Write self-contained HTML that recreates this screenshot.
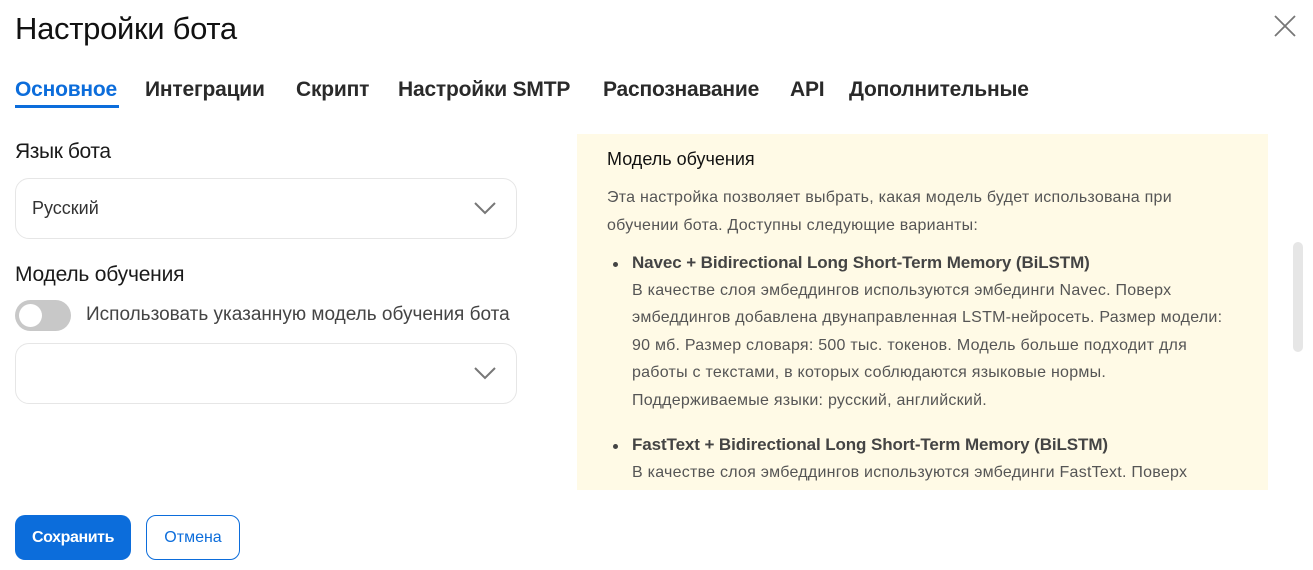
<!DOCTYPE html>
<html><head><meta charset="utf-8"><style>
body{margin:0;width:1313px;height:570px;background:#fff;font-family:"Liberation Sans",sans-serif;position:relative;overflow:hidden;color:#222}
.a{position:absolute;white-space:nowrap}
.tab{position:absolute;top:78px;font-size:21px;font-weight:bold;letter-spacing:-0.2px;color:#2a2a2a}
.sel{position:absolute;left:15px;width:502px;height:61px;border:1.5px solid #e6e6e6;border-radius:14px;box-sizing:border-box}
.p{position:absolute;left:607px;font-size:16px;color:#555;letter-spacing:0.25px;white-space:nowrap;line-height:20px}
.b{left:632px}
.h{font-weight:bold;color:#444;letter-spacing:-0.1px;font-size:17px}
</style></head><body>
<div class="a" style="left:15px;top:11px;font-size:31px;color:#111;letter-spacing:-0.3px">Настройки бота</div>
<svg class="a" style="left:1273px;top:14px" width="24" height="24"><path d="M2 2L22 22M22 2L2 22" stroke="#777" stroke-width="1.8"/></svg>
<div class="tab" style="left:15px;color:#0c6ddb">Основное</div>
<div class="a" style="left:15px;top:105px;width:104px;height:3px;background:#0c6ddb"></div>
<div class="tab" style="left:145px">Интеграции</div>
<div class="tab" style="left:296px">Скрипт</div>
<div class="tab" style="left:398px">Настройки SMTP</div>
<div class="tab" style="left:603px">Распознавание</div>
<div class="tab" style="left:790px">API</div>
<div class="tab" style="left:849px">Дополнительные</div>

<div class="a" style="left:15px;top:140px;font-size:21px;color:#1a1a1a;letter-spacing:-0.4px">Язык бота</div>
<div class="sel" style="top:178px"></div>
<div class="a" style="left:32px;top:198px;font-size:18px;color:#333">Русский</div>
<svg class="a" style="left:473px;top:200px" width="24" height="16"><path d="M2 3L12 13L22 3" stroke="#777" stroke-width="2" fill="none"/></svg>

<div class="a" style="left:15px;top:263px;font-size:21px;color:#1a1a1a;letter-spacing:-0.2px">Модель обучения</div>
<div class="a" style="left:15px;top:300px;width:56px;height:31px;border-radius:16px;background:#c8c8c8"></div>
<div class="a" style="left:19px;top:304px;width:23px;height:23px;border-radius:50%;background:#fff"></div>
<div class="a" style="left:86px;top:304px;font-size:19px;color:#444;letter-spacing:0px">Использовать указанную модель обучения бота</div>
<div class="sel" style="top:343px"></div>
<svg class="a" style="left:473px;top:365px" width="24" height="16"><path d="M2 3L12 13L22 3" stroke="#777" stroke-width="2" fill="none"/></svg>

<div class="a" style="left:577px;top:134px;width:691px;height:356px;background:#fffae6"></div>
<div class="a" style="left:1293px;top:242px;width:10px;height:110px;border-radius:5px;background:#e6e6e6"></div>
<div class="p" style="top:149px;font-size:18px;color:#111;letter-spacing:0">Модель обучения</div>
<div class="p" style="top:188px">Эта настройка позволяет выбрать, какая модель будет использована при</div>
<div class="p" style="top:216px">обучении бота. Доступны следующие варианты:</div>
<div class="a" style="left:613px;top:262px;width:5px;height:5px;border-radius:50%;background:#444"></div>
<div class="p b h" style="top:253px">Navec + Bidirectional Long Short-Term Memory (BiLSTM)</div>
<div class="p b" style="top:281px">В качестве слоя эмбеддингов используются эмбединги Navec. Поверх</div>
<div class="p b" style="top:308px">эмбеддингов добавлена двунаправленная LSTM-нейросеть. Размер модели:</div>
<div class="p b" style="top:336px">90 мб. Размер словаря: 500 тыс. токенов. Модель больше подходит для</div>
<div class="p b" style="top:363px">работы с текстами, в которых соблюдаются языковые нормы.</div>
<div class="p b" style="top:391px">Поддерживаемые языки: русский, английский.</div>
<div class="a" style="left:613px;top:444px;width:5px;height:5px;border-radius:50%;background:#444"></div>
<div class="p b h" style="top:435px">FastText + Bidirectional Long Short-Term Memory (BiLSTM)</div>
<div class="p b" style="top:463px">В качестве слоя эмбеддингов используются эмбединги FastText. Поверх</div>

<div class="a" style="left:15px;top:515px;width:116px;height:45px;border-radius:10px;background:#0c6ddb;color:#fff;font-size:16px;font-weight:bold;letter-spacing:-0.4px;text-align:center;line-height:45px">Сохранить</div>
<div class="a" style="left:146px;top:515px;width:94px;height:45px;box-sizing:border-box;border:1px solid #0c6ddb;border-radius:10px;color:#0c6ddb;font-size:16px;text-align:center;line-height:43px">Отмена</div>
</body></html>
